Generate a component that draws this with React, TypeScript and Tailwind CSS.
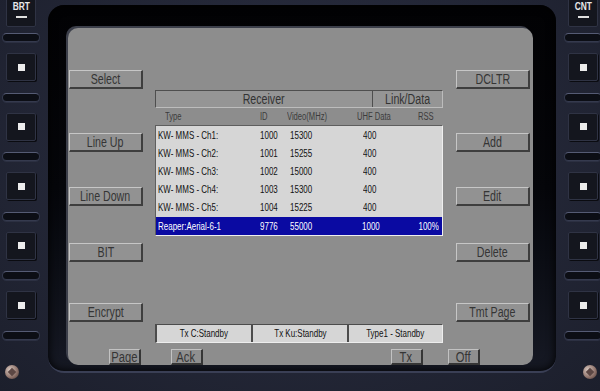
import React from 'react';

// MFD page: bezel with side keys, grey screen with soft keys and a data-link table.

const FONT = { fontFamily: '"Liberation Sans", Arial, sans-serif' };

type Row = { type: string; id: string; video: string; uhf: string; rss: string };

const rows: Row[] = [
  { type: 'KW- MMS - Ch1:', id: '1000', video: '15300', uhf: '400', rss: '' },
  { type: 'KW- MMS - Ch2:', id: '1001', video: '15255', uhf: '400', rss: '' },
  { type: 'KW- MMS - Ch3:', id: '1002', video: '15000', uhf: '400', rss: '' },
  { type: 'KW- MMS - Ch4:', id: '1003', video: '15300', uhf: '400', rss: '' },
  { type: 'KW- MMS - Ch5:', id: '1004', video: '15225', uhf: '400', rss: '' },
];

// the sim font is a narrow face, so squeeze Liberation Sans horizontally
function Narrow({ children, className = 'origin-center' }: { children: React.ReactNode; className?: string }) {
  return <span className={`inline-block whitespace-nowrap scale-x-[0.76] ${className}`}>{children}</span>;
}

function SoftKey({ label, className = '' }: { label: string; className?: string }) {
  return (
    <div
      className={`h-[19px] flex items-center justify-center bg-[#929292] border-t border-l border-[#c6c6c6] border-r-2 border-b-2 border-r-[#3e3e3e] border-b-[#3e3e3e] text-[14px] leading-none text-[#353535] ${className}`}
    >
      <Narrow>{label}</Narrow>
    </div>
  );
}

function SmallKey({ label, className = '' }: { label: string; className?: string }) {
  return (
    <div
      className={`h-[16px] w-[32px] flex items-center justify-center bg-[#8f8f8f] border-t border-l border-[#c2c2c2] border-r-2 border-b-2 border-r-[#353535] border-b-[#353535] text-[14px] leading-none text-[#353535] ${className}`}
    >
      <span className="inline-block whitespace-nowrap scale-x-[0.8] origin-center -ml-[1px]">{label}</span>
    </div>
  );
}

function BezelSquare() {
  return (
    <div className="mt-[11.25px] h-[28px] w-[30px] rounded-[2px] bg-[#14161e] border border-[#2f3344] shadow-[1px_1px_0_#0a0b10] flex items-center justify-center">
      <div className="h-[7px] w-[7px] bg-[#ececec]" />
    </div>
  );
}

function BezelBar({ first = false }: { first?: boolean }) {
  return (
    <div
      className={`${first ? 'mt-[6px]' : 'mt-[11.25px]'} h-[9px] w-[38px] rounded-full bg-[#0c0e15] border border-[#353a4e] border-t-[#555b74] shadow-[0_1px_0_#2c3042]`}
    />
  );
}

function Screw({ className = '' }: { className?: string }) {
  return (
    <div
      className={`mt-[25.5px] h-[14px] w-[14px] rounded-full bg-[radial-gradient(circle_at_35%_35%,#d8c8c0,#8a6e66_60%,#3b2e2c)] flex items-center justify-center ${className}`}
    >
      <div className="h-[6px] w-[6px] rotate-45 bg-[#5c4744]" />
    </div>
  );
}

function KeyColumn({ label, screwClass }: { label: string; screwClass: string }) {
  return (
    <div className="w-[42px] shrink-0 flex flex-col items-center">
      <div className="-mt-[12px] h-[39px] w-[30px] rounded-[2px] bg-[#14161e] border border-[#2f3344] flex flex-col items-center">
        <span className="mt-[12px] text-[11px] font-bold leading-none text-[#e8e8e8]">
          <Narrow>{label}</Narrow>
        </span>
        <div className="mt-[4px] h-[2px] w-[11px] bg-[#e0e0e0]" />
      </div>
      <BezelBar first />
      {[0, 1, 2, 3, 4].map((i) => (
        <React.Fragment key={i}>
          <BezelSquare />
          <BezelBar />
        </React.Fragment>
      ))}
      <Screw className={screwClass} />
    </div>
  );
}

function DataRow({ r, selected = false }: { r: Row; selected?: boolean }) {
  return (
    <div className={`h-[18px] flex items-center ${selected ? 'mt-[1px] bg-[#0a0aa2] text-white' : 'text-[#111]'}`}>
      <span className="pl-[2px] w-[104px]"><Narrow className="origin-left">{r.type}</Narrow></span>
      <span className="w-[30px]"><Narrow className="origin-left">{r.id}</Narrow></span>
      <span className="w-[73px]"><Narrow className="origin-left">{r.video}</Narrow></span>
      <span className="w-[50px]"><Narrow className="origin-left">{r.uhf}</Narrow></span>
      <span className="flex-1 text-right pr-[3px]"><Narrow className="origin-right">{r.rss}</Narrow></span>
    </div>
  );
}

export default function App() {
  return (
    <div
      className="w-[600px] h-[391px] overflow-hidden flex bg-[radial-gradient(ellipse_at_50%_40%,#2c3044,#1c1f2c)]"
      style={FONT}
    >
      <KeyColumn label="BRT" screwClass="self-start ml-[5px]" />

      <div className="w-[520px] shrink-0 pt-[5px]">
        <div className="mx-[6px] h-[368px] pt-[23px] pl-[20px] rounded-[16px] bg-linear-to-b from-[#020204] via-[#05060a] to-[#161924] border-b-2 border-[#3a3f55] shadow-[inset_0_0_10px_#000]">
          <div className="w-[465px] h-[337px] rounded-[10px] bg-[#8d8d8d] shadow-[-2px_-2px_0_#3c3f4a] flex flex-col">
            <div className="flex h-[315px]">
              {/* left soft keys */}
              <div className="ml-[1px] w-[74px] flex flex-col">
                <SoftKey label="Select" className="mt-[42px]" />
                <SoftKey label="Line Up" className="mt-[44px]" />
                <SoftKey label="Line Down" className="mt-[35px]" />
                <SoftKey label="BIT" className="mt-[37px]" />
                <SoftKey label="Encrypt" className="mt-[41px]" />
              </div>

              {/* table */}
              <div className="ml-[12px] w-[288px] flex flex-col">
                <div className="mt-[62px] h-[18px] flex bg-[#959595] border-t border-l border-[#4e4e4e] border-b border-r border-b-[#bcbcbc] border-r-[#bcbcbc] text-[14px] leading-none text-[#333]">
                  <div className="w-[216px] flex items-center justify-center"><Narrow>Receiver</Narrow></div>
                  <div className="flex-1 flex items-center justify-center border-l border-[#4e4e4e]"><Narrow>Link/Data</Narrow></div>
                </div>
                <div className="h-[17px] flex items-center text-[10px] leading-none text-[#3c3c3c]">
                  <span className="pl-[10px] w-[105px]"><Narrow className="origin-left">Type</Narrow></span>
                  <span className="w-[27px]"><Narrow className="origin-left">ID</Narrow></span>
                  <span className="w-[70px]"><Narrow className="origin-left">Video(MHz)</Narrow></span>
                  <span className="w-[61px]"><Narrow className="origin-left">UHF Data</Narrow></span>
                  <span><Narrow className="origin-left">RSS</Narrow></span>
                </div>
                <div className="bg-[#d6d6d6] border-t border-l border-[#5e5e5e] border-b border-r border-b-[#efefef] border-r-[#efefef] text-[10.5px] leading-none">
                  {rows.map((r) => (
                    <DataRow key={r.type} r={r} />
                  ))}
                  <DataRow r={{ type: 'Reaper:Aerial-6-1', id: '9776', video: '55000', uhf: '1000', rss: '100%' }} selected />
                </div>
                <div className="mt-[88px] h-[19px] flex bg-[#d6d6d6] border-t border-l-2 border-[#4c4c4c] border-b border-r border-b-[#ededed] border-r-[#ededed] text-[10.5px] leading-none text-[#111]">
                  <div className="w-[94px] flex items-center justify-center"><Narrow>Tx C:Standby</Narrow></div>
                  <div className="w-[96px] flex items-center justify-center border-l-2 border-[#4c4c4c]"><Narrow>Tx Ku:Standby</Narrow></div>
                  <div className="flex-1 flex items-center justify-center border-l-2 border-[#4c4c4c]"><Narrow>Type1 - Standby</Narrow></div>
                </div>
              </div>

              {/* right soft keys */}
              <div className="ml-[13px] w-[74px] flex flex-col">
                <SoftKey label="DCLTR" className="mt-[42px]" />
                <SoftKey label="Add" className="mt-[44px]" />
                <SoftKey label="Edit" className="mt-[35px]" />
                <SoftKey label="Delete" className="mt-[37px]" />
                <SoftKey label="Tmt Page" className="mt-[41px]" />
              </div>
            </div>

            {/* bottom keys */}
            <div className="mt-[6px] flex">
              <SmallKey label="Page" className="ml-[41px]" />
              <SmallKey label="Ack" className="ml-[30px]" />
              <SmallKey label="Tx" className="ml-[188px]" />
              <SmallKey label="Off" className="ml-[25px]" />
            </div>
          </div>
        </div>
      </div>

      <KeyColumn label="CNT" screwClass="self-start ml-[21px]" />
    </div>
  );
}
